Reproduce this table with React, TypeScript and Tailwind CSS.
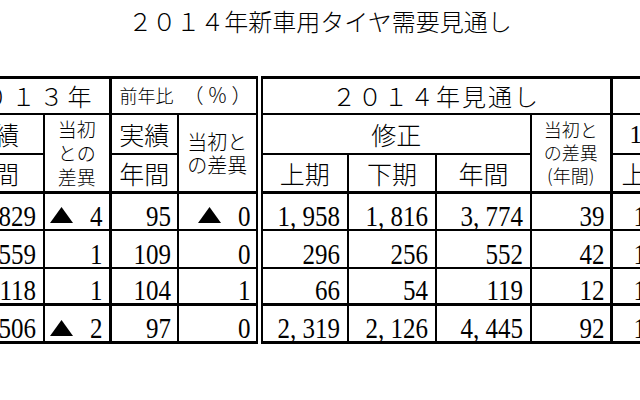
import React from "react";

const Num = ({ v }: { v: string }) => (
  <span className="inline-block scale-y-[1.18] leading-[25px]">{v}</span>
);

const Tri = () => (
  <svg width="23" height="16" viewBox="0 0 23 16" className="block">
    <polygon points="11.5,0 23,16 0,16" fill="black" />
  </svg>
);

const Neg = ({ v }: { v: string }) => (
  <span className="inline-flex items-center gap-[17px]">
    <Tri />
    <Num v={v} />
  </span>
);

const base = "border-2 border-black p-0";
const dbl = "border-r-[7px] [border-right-style:double]";

type Row = {
  a: string;
  b: string;
  bNeg?: boolean;
  c: string;
  d: string;
  dNeg?: boolean;
  e: string;
  f: string;
  g: string;
  h: string;
  i: string;
};

const rows: Row[] = [
  { a: "3, 829", b: "4", bNeg: true, c: "95", d: "0", dNeg: true, e: "1, 958", f: "1, 816", g: "3, 774", h: "39", i: "1, 970" },
  { a: "559", b: "1", c: "109", d: "0", e: "296", f: "256", g: "552", h: "42", i: "1, 300" },
  { a: "118", b: "1", c: "104", d: "1", e: "66", f: "54", g: "119", h: "12", i: "1, 120" },
  { a: "4, 506", b: "2", bNeg: true, c: "97", d: "0", e: "2, 319", f: "2, 126", g: "4, 445", h: "92", i: "1, 390" },
];

export default function App() {
  const num = "text-right align-bottom pb-[1px] leading-[25px] text-[25px] font-['Liberation_Serif',serif]";
  return (
    <div className="w-[640px] h-[400px] bg-white overflow-hidden text-black font-['Noto_Sans_CJK_JP',sans-serif]">
      <div className="pt-[9px] text-center text-[24px] leading-[24px] font-light">
        ２０１４年新車用タイヤ需要見通し
      </div>
      <div className="mt-[43px]">
        <table className="table-fixed border-collapse ml-[-57px] w-[767px] font-light">
          <colgroup>
            <col className="w-[100px]" />
            <col className="w-[66px]" />
            <col className="w-[68px]" />
            <col className="w-[81px]" />
            <col className="w-[89px]" />
            <col className="w-[88px]" />
            <col className="w-[95px]" />
            <col className="w-[80px]" />
            <col className="w-[100px]" />
          </colgroup>
          <tbody>
            <tr className="h-[36px]">
              <td colSpan={2} className={`${base} border-t-[3px] border-r-[3px] text-right pr-[13px] text-[24px] leading-[24px] tracking-[4px] whitespace-nowrap`}>
                ２０１３年
              </td>
              <td colSpan={2} className={`${base} border-t-[3px] ${dbl} text-left pl-[8px] whitespace-nowrap`}>
                <span className="text-[18px] leading-[20px]">前年比</span>
                <span className="ml-[10px] text-[20px] leading-[20px] tracking-[4px]">（％）</span>
              </td>
              <td colSpan={4} className={`${base} border-t-[3px] border-r-[3px] text-center text-[24px] leading-[24px] tracking-[2px] whitespace-nowrap`}>
                ２０１４年見通し
              </td>
              <td className={`${base} border-t-[3px] border-r-0`}></td>
            </tr>
            <tr className="h-[40px]">
              <td className={`${base} text-center text-[25px] leading-[26px]`}>実績</td>
              <td rowSpan={2} className={`${base} border-r-[3px] border-b-[3px] text-center text-[19px] leading-[24px]`}>
                当初<br />との<br />差異
              </td>
              <td className={`${base} text-center text-[25px] leading-[26px]`}>実績</td>
              <td rowSpan={2} className={`${base} ${dbl} border-b-[3px] text-center text-[20px] leading-[23px]`}>
                当初と<br />の差異
              </td>
              <td colSpan={3} className={`${base} text-center text-[25px] leading-[26px]`}>修正</td>
              <td rowSpan={2} className={`${base} border-r-[3px] border-b-[3px] text-center text-[18px] leading-[23px]`}>
                当初と<br />の差異<br />(年間)
              </td>
              <td className={`${base} border-r-0 text-left pl-[17px] text-[25px] leading-[26px] whitespace-nowrap`}>
                <span className="font-['Liberation_Serif',serif]">15</span>年見通し
              </td>
            </tr>
            <tr className="h-[39px]">
              <td className={`${base} border-b-[3px] text-center text-[25px] leading-[26px]`}>年間</td>
              <td className={`${base} border-b-[3px] text-center text-[25px] leading-[26px]`}>年間</td>
              <td className={`${base} border-b-[3px] text-center text-[25px] leading-[26px]`}>上期</td>
              <td className={`${base} border-b-[3px] text-center text-[25px] leading-[26px]`}>下期</td>
              <td className={`${base} border-b-[3px] text-center text-[25px] leading-[26px]`}>年間</td>
              <td className={`${base} border-b-[3px] border-r-0 text-left pl-[9px] text-[25px] leading-[26px]`}>上期</td>
            </tr>
            {rows.map((r, idx) => {
              const last = idx === rows.length - 1;
              const rb = last ? "border-t-[3px] border-b-[3px]" : "";
              return (
                <tr key={idx} className={idx % 2 === 0 ? "h-[37px]" : "h-[38px]"}>
                  <td className={`${base} ${rb} ${num} pr-[7px] whitespace-nowrap`}><Num v={r.a} /></td>
                  <td className={`${base} ${rb} border-r-[3px] ${num} pr-[6px]`}>
                    {r.bNeg ? <Neg v={r.b} /> : <Num v={r.b} />}
                  </td>
                  <td className={`${base} ${rb} ${num} pr-[6px]`}><Num v={r.c} /></td>
                  <td className={`${base} ${rb} ${dbl} ${num} pr-[5px]`}>
                    {r.dNeg ? <Neg v={r.d} /> : <Num v={r.d} />}
                  </td>
                  <td className={`${base} ${rb} ${num} pr-[7px] whitespace-nowrap`}><Num v={r.e} /></td>
                  <td className={`${base} ${rb} ${num} pr-[7px] whitespace-nowrap`}><Num v={r.f} /></td>
                  <td className={`${base} ${rb} ${num} pr-[7px] whitespace-nowrap`}><Num v={r.g} /></td>
                  <td className={`${base} ${rb} border-r-[3px] ${num} pr-[5px]`}><Num v={r.h} /></td>
                  <td className={`${base} ${rb} border-r-0 align-bottom pb-[1px] leading-[25px] text-[25px] font-['Liberation_Serif',serif] text-left pl-[21px] whitespace-nowrap`}>
                    <Num v={r.i} />
                  </td>
                </tr>
              );
            })}
          </tbody>
        </table>
      </div>
    </div>
  );
}
